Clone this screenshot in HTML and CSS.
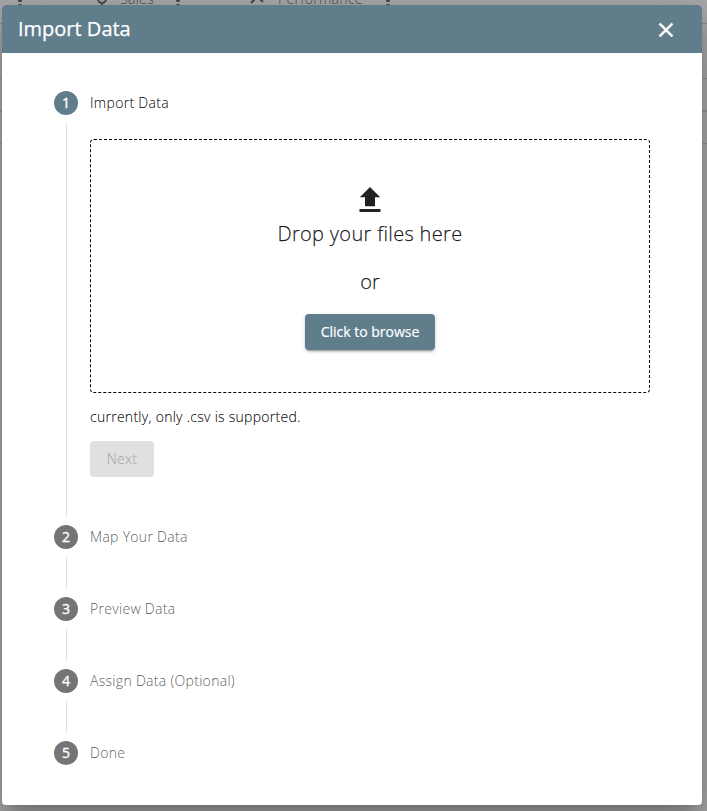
FILE: index.html
```html
<!DOCTYPE html>
<html lang="en">
<head>
<meta charset="utf-8">
<title>Import Data</title>
<link rel="stylesheet" href="styles.css">
</head>
<body>
<div class="backdrop-page" aria-hidden="true">
  <div class="tabs">
    <span class="dots dots-first"></span>
    <svg class="tab-icon pin" viewBox="0 0 12 8"><path d="M2 0a4 4 0 0 0 8 0M6 4v2.500" fill="none" stroke="currentColor" stroke-width="2"/></svg>
    <span class="tab-name">Sales</span>
    <span class="dots dots-sales"></span>
    <svg class="tab-icon chart" viewBox="0 0 14 8"><path d="M1 4l4-4M10 0l3 3" fill="none" stroke="currentColor" stroke-width="2"/></svg>
    <span class="tab-name">Performance</span>
    <span class="dots dots-perf"></span>
  </div>
  <div class="row row-a"></div>
  <div class="row row-b"></div>
  <div class="row row-c"></div>
</div>
<section class="dialog" role="dialog" aria-label="Import Data">
  <header class="dialog-header">
    <h1>Import Data</h1>
    <button class="close" aria-label="Close"><svg viewBox="0 0 24 24"><path d="M19 6.41 17.59 5 12 10.59 6.41 5 5 6.41 10.59 12 5 17.59 6.41 19 12 13.41 17.59 19 19 17.59 13.41 12z" fill="#fff" stroke="#fff" stroke-width=".6"/></svg></button>
  </header>
  <div class="stepper">
    <div class="step active">
      <div class="step-header"><span class="badge">1</span><span class="label">Import Data</span></div>
      <div class="step-content open">
        <div class="dropzone">
          <svg class="upload" viewBox="0 0 22 26"><path d="M11 0 0.8 10.2H6v9h10v-9h5.2zM0.5 22h21v3H0.5z" fill="#212121"/></svg>
          <p class="drop-text">Drop your files here</p>
          <p class="or">or</p>
          <button class="browse">Click to browse</button>
        </div>
        <p class="hint">currently, only .csv is supported.</p>
        <button class="next" disabled>Next</button>
      </div>
    </div>
    <div class="step"><div class="step-header"><span class="badge">2</span><span class="label">Map Your Data</span></div><div class="step-content"></div></div>
    <div class="step"><div class="step-header"><span class="badge">3</span><span class="label">Preview Data</span></div><div class="step-content"></div></div>
    <div class="step"><div class="step-header"><span class="badge">4</span><span class="label">Assign Data (Optional)</span></div><div class="step-content"></div></div>
    <div class="step"><div class="step-header"><span class="badge">5</span><span class="label">Done</span></div></div>
  </div>
</section>
</body>
</html>
```
FILE: styles.css
```css
* { box-sizing: border-box; }
body {
  margin: 0;
  height: 811px;
  padding: 5px 5px 6px 2px;
  overflow: hidden;
  position: relative;
  background: #a9a9a9;
  font-family: "Open Sans", sans-serif;
  font-size: 14px;
  color: rgba(0, 0, 0, .87);
}
h1, p { margin: 0; }
button { font: inherit; border: 0; padding: 0; }

/* Dimmed page behind the dialog */
.backdrop-page { position: absolute; inset: 0; overflow: hidden; color: #484848; }
.tabs { display: flex; height: 24px; border-bottom: 1px solid #8c8c8c; }
.tab-name { font-weight: 330; letter-spacing: .3px; line-height: 20px; margin-top: -11px; }
.tab-icon { height: 8px; margin-top: -1px; }
.pin { width: 12px; margin-left: 74px; margin-right: 12px; }
.chart { width: 14px; margin-left: 70px; margin-right: 14px; }
.dots { width: 4px; height: 8px; background: radial-gradient(circle at 2px 0, currentColor 2px, transparent 2.3px), radial-gradient(circle at 2px 6px, currentColor 2px, transparent 2.3px); }
.dots-first { margin-left: 18px; }
.dots-sales { margin-left: 22px; }
.dots-perf { margin-left: 23px; }
.row { border-bottom: 1px solid #929292; }
.row-a { height: 55px; }
.row-b { height: 33px; border-bottom-width: 2px; }
.row-c { height: 32px; }

.dialog {
  position: relative;
  width: 700px;
  height: 800px;
  overflow: hidden;
  background: #fff;
  border-radius: 4px;
  box-shadow: 0 11px 15px -7px rgba(0, 0, 0, .2), 0 24px 38px 3px rgba(0, 0, 0, .14), 0 9px 46px 8px rgba(0, 0, 0, .12);
}
.dialog-header {
  display: flex;
  align-items: center;
  justify-content: space-between;
  height: 48px;
  padding: 0 24px 0 16px;
  background: #607d8b;
  color: #fff;
}
.dialog-header h1 { font-size: 20px; font-weight: 400; line-height: 32px; -webkit-text-stroke: .25px #fff; }
.close { display: flex; width: 24px; height: 24px; margin-top: 2px; background: none; }
.close svg { width: 24px; height: 24px; }

.stepper { padding: 14px 28px; }
.step-header { display: flex; align-items: center; height: 72px; padding: 24px; }
.badge {
  width: 24px;
  height: 24px;
  margin-right: 12px;
  border-radius: 50%;
  background: #757575;
  color: #fff;
  font-weight: 500;
  line-height: 24px;
  text-align: center;
  -webkit-text-stroke: .35px #fff;
}
.label { padding-bottom: 2px; font-weight: 300; letter-spacing: .3px; color: rgba(0, 0, 0, .6); -webkit-text-stroke: .1px currentColor; }
.active .badge { background: #607d8b; }
.active .label { color: rgba(0, 0, 0, .95); }
.step-content { position: relative; margin-left: 36px; padding: 0 24px; }
.step-content::before {
  content: "";
  position: absolute;
  left: 0;
  top: -16px;
  bottom: -16px;
  border-left: 1px solid rgba(0, 0, 0, .12);
}
.open { height: 362px; }
.dropzone {
  display: flex;
  flex-direction: column;
  align-items: center;
  width: 560px;
  height: 254px;
  padding-top: 47px;
  border: 1px dashed #000;
  border-radius: 4px;
  font-size: 20px;
  font-weight: 300;
}
.upload { width: 22px; height: 26px; }
.drop-text { margin-top: 5px; line-height: 32px; letter-spacing: .32px; -webkit-text-stroke: .25px currentColor; }
.or { margin-top: 16px; line-height: 32px; -webkit-text-stroke: .25px currentColor; }
.browse {
  width: 130px;
  height: 36px;
  margin-top: 16px;
  padding-bottom: 1px;
  border-radius: 4px;
  background: #607d8b;
  color: #fff;
  font-size: 14px;
  font-weight: 400;
  -webkit-text-stroke: .2px #fff;
  box-shadow: 0 3px 1px -2px rgba(0, 0, 0, .2), 0 2px 2px 0 rgba(0, 0, 0, .14), 0 1px 5px 0 rgba(0, 0, 0, .12);
}
.hint { margin-top: 14px; font-weight: 300; letter-spacing: .27px; line-height: 20px; color: rgba(0, 0, 0, .95); -webkit-text-stroke: .15px currentColor; }
.next {
  width: 64px;
  height: 36px;
  margin-top: 14px;
  padding-bottom: 2px;
  border-radius: 4px;
  background: #e0e0e0;
  color: #a0a0a0;
  font-weight: 300;
  letter-spacing: .28px;
}
```
